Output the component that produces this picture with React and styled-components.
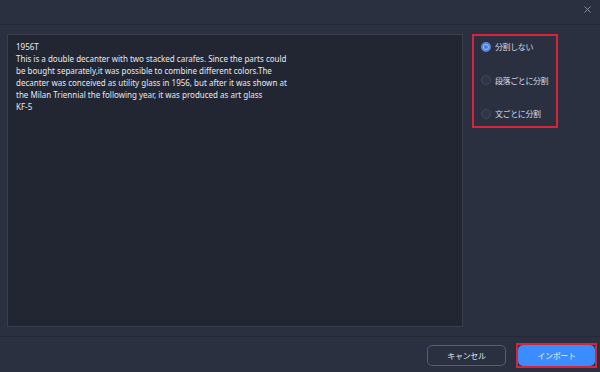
import React, { useState } from "react";
import styled, { createGlobalStyle } from "styled-components";

const GlobalStyle = createGlobalStyle`
    html, body {
        margin: 0;
        padding: 0;
        background: #2b3040;
    }
    body {
        font-family: "Noto Sans", "Noto Sans CJK JP", sans-serif;
    }
`

const options = ["分割しない", "段落ごとに分割", "文ごとに分割"];

const sampleText = `1956T
This is a double decanter with two stacked carafes. Since the parts could
be bought separately,it was possible to combine different colors.The
decanter was conceived as utility glass in 1956, but after it was shown at
the Milan Triennial the following year, it was produced as art glass
KF-5`;

const App = () => {
    const [mode, setMode] = useState(0);

    return (
        <Dialog>
            <GlobalStyle />
            <Header>
                <CloseButton aria-label="close">
                    <svg width="7" height="7" viewBox="0 0 7 7">
                        <path d="M0.5 0.5 L6.5 6.5 M6.5 0.5 L0.5 6.5" stroke="#8a90a0" strokeWidth="1" />
                    </svg>
                </CloseButton>
            </Header>
            <Body>
                <TextBox defaultValue={sampleText} spellCheck={false} />
                <OptionBox>
                    {options.map((label, i) => (
                        <Option key={label} onClick={() => setMode(i)}>
                            <Radio checked={mode === i} />
                            <OptionLabel>{label}</OptionLabel>
                        </Option>
                    ))}
                </OptionBox>
            </Body>
            <Footer>
                <Button>キャンセル</Button>
                <Highlight>
                    <Button primary>インポート</Button>
                </Highlight>
            </Footer>
        </Dialog>
    )
}

const Dialog = styled.div`
    width: 600px;
    height: 372px;
    display: flex;
    flex-direction: column;
    background: #2b3040;
    overflow: hidden;
`

const Header = styled.div`
    height: 25px;
    display: flex;
    justify-content: flex-end;
    align-items: flex-start;
    border-bottom: 1px solid #252937;
    box-sizing: border-box;
`

const CloseButton = styled.div`
    width: 16px;
    height: 16px;
    margin: 1px 5px 0 0;
    display: flex;
    align-items: center;
    justify-content: center;
`

const Body = styled.div`
    flex: 1;
    display: flex;
    padding: 9px 0 0 7px;
    gap: 9px;
    border-bottom: 1px solid #252937;
    box-sizing: border-box;
`

const TextBox = styled.textarea`
    width: 456px;
    height: 293px;
    box-sizing: border-box;
    resize: none;
    background: #222633;
    border: 1px solid #3a3f4e;
    color: #e6e8ee;
    font-family: "Noto Sans", sans-serif;
    font-size: 8px;
    line-height: 12px;
    padding: 6px 8px;
    outline: none;
    white-space: pre;
    overflow: hidden;
`

const OptionBox = styled.div`
    width: 86px;
    height: 94px;
    box-sizing: border-box;
    border: 2px solid #d8243a;
    display: flex;
    flex-direction: column;
    justify-content: space-between;
    padding: 5px 0 7px 7px;
`

const Option = styled.label`
    display: flex;
    align-items: center;
    gap: 4px;
    cursor: pointer;
    white-space: nowrap;
`

const Radio = styled.span`
    flex: none;
    width: 10px;
    height: 10px;
    border-radius: 50%;
    box-sizing: border-box;
    background: ${p => p.checked ? "#3a7cf0" : "#30364a"};
    border: ${p => p.checked ? "2px solid #5a86d8" : "1px solid #40475e"};
    box-shadow: ${p => p.checked ? "inset 0 0 0 1px #9dbcf5" : "none"};
`

const OptionLabel = styled.span`
    font-family: "Noto Sans CJK JP", sans-serif;
    font-size: 8px;
    letter-spacing: -0.4px;
    color: #d7dae3;
`

const Footer = styled.div`
    height: 35px;
    display: flex;
    align-items: center;
    justify-content: flex-end;
    gap: 10px;
    padding: 2px 3px 0 0;
    box-sizing: border-box;
`

const Highlight = styled.div`
    border: 2px solid #d8243a;
    display: flex;
`

const Button = styled.button`
    width: ${p => p.primary ? "77px" : "79px"};
    height: 21px;
    box-sizing: border-box;
    border-radius: 5px;
    border: ${p => p.primary ? "none" : "1.5px solid #3d5ea8"};
    background: ${p => p.primary ? "#3b8cff" : "transparent"};
    color: ${p => p.primary ? "#eaf2ff" : "#dde1ea"};
    font-family: "Noto Sans CJK JP", sans-serif;
    font-size: 8px;
    letter-spacing: -0.3px;
    padding: 0;
`

export default App;
